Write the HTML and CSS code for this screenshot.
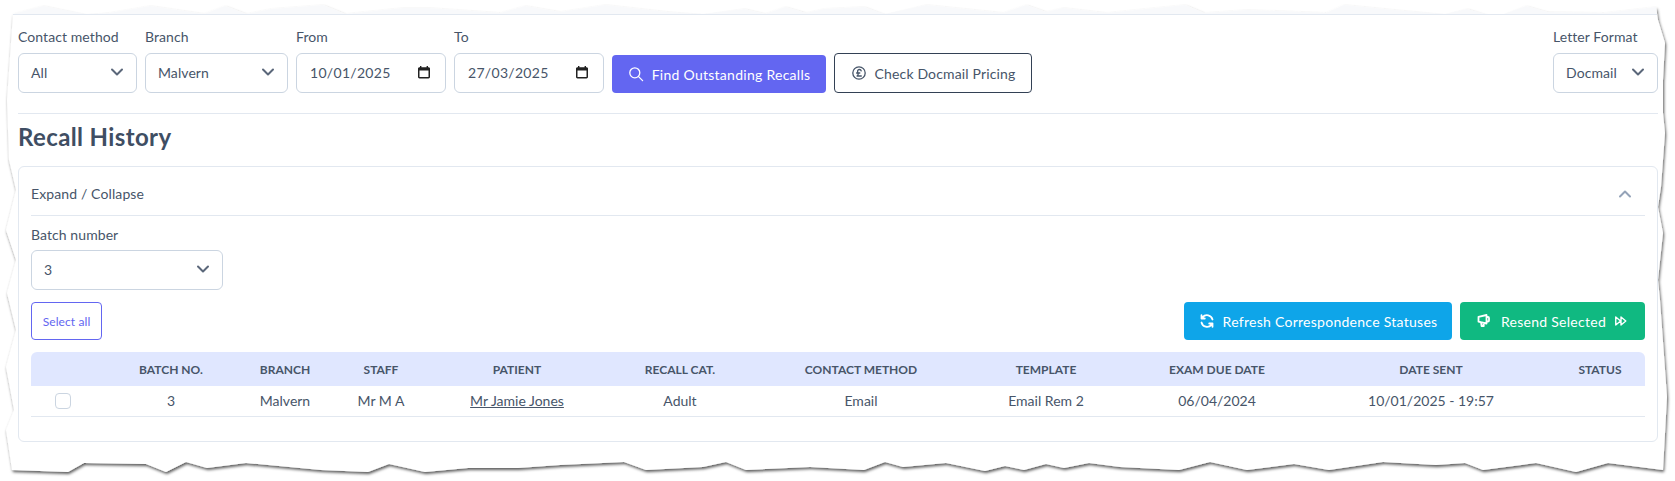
FILE: index.html
```html
<!DOCTYPE html>
<html lang="en">
<head>
<meta charset="utf-8">
<title>Recall History</title>
<link rel="stylesheet" href="styles.css">
</head>
<body>
<svg class="torn" viewBox="0 0 1675 481" width="1675" height="481" aria-hidden="true">
  <defs>
    <filter id="tornShadow" x="-2%" y="-5%" width="104%" height="110%">
      <feDropShadow dx="1" dy="2" stdDeviation="1.4" flood-color="#000" flood-opacity=".65"/>
    </filter>
  </defs>
  <path class="sheet" filter="url(#tornShadow)" d="M13 14 L43 6 L86 15 L109 13 L150 6 L204 14 L225 6 L246 14 L271 9 L323 5 L345 14 L403 8 L428 8 L500 13 L525 6 L560 12 L605 5 L667 12 L703 15 L744 9 L765 14 L785 7 L806 13 L824 9 L864 7 L885 15 L926 5 L1003 13 L1026 5 L1046 12 L1063 8 L1106 13 L1185 5 L1204 13 L1247 10 L1326 13 L1344 5 L1394 10 L1445 15 L1467 9 L1486 15 L1504 15 L1526 6 L1547 12 L1604 13 L1656 7 L1658 20 L1665 43 L1663 80 L1663 113 L1665 133 L1661 187 L1658 207 L1663 233 L1658 280 L1660 300 L1667 397 L1663 470 L1608 463 L1576 472 L1536 463 L1483 470 L1465 463 L1436 465 L1383 462 L1329 470 L1294 464 L1247 470 L1210 462 L1179 470 L1120 467 L1089 463 L1064 468 L1046 464 L1024 470 L1005 466 L985 471 L946 463 L903 467 L885 462 L864 470 L810 467 L746 470 L726 462 L703 467 L646 470 L624 462 L560 465 L518 468 L468 468 L425 472 L389 464 L368 472 L321 470 L246 463 L207 468 L186 462 L166 472 L146 464 L84 463 L68 472 L12 470 L6 430 L14 410 L6 367 L16 330 L7 293 L16 260 L6 230 L16 190 L9 160 L7 100 L13 14 Z"/>
  <path class="strip" d="M13 14 L43 6 L86 14 L109 13 L150 6 L204 14 L225 6 L246 14 L271 9 L323 5 L345 14 L403 8 L428 8 L500 13 L525 6 L560 12 L605 5 L667 12 L703 14 L744 9 L765 14 L785 7 L806 13 L824 9 L864 7 L885 14 L926 5 L1003 13 L1026 5 L1046 12 L1063 8 L1106 13 L1185 5 L1204 13 L1247 10 L1326 13 L1344 5 L1394 10 L1445 14 L1467 9 L1486 14 L1504 14 L1526 6 L1547 12 L1604 13 L1656 7 L1657 14 Z"/>
  <path class="strip-line" d="M13 14.500H1657"/>
</svg>
<main class="page">
  <section class="filters">
    <div class="field w-contact">
      <label class="label">Contact method</label>
      <div class="control"><span>All</span><svg class="chev" viewBox="0 0 20 20"><path d="M5 7.5l5 5 5-5"/></svg></div>
    </div>
    <div class="field w-branch">
      <label class="label">Branch</label>
      <div class="control"><span>Malvern</span><svg class="chev" viewBox="0 0 20 20"><path d="M5 7.5l5 5 5-5"/></svg></div>
    </div>
    <div class="field w-date">
      <label class="label">From</label>
      <div class="control date"><span>10/01/2025</span><svg class="cal" viewBox="0 0 14 14"><path d="M11.5 2.2H11V1H9.6v1.2H4.4V1H3v1.2h-.5C1.7 2.2 1 2.8 1 3.6v8.4c0 .8.7 1.4 1.5 1.4h9c.8 0 1.5-.6 1.5-1.4V3.600c0-.8-.7-1.400-1.500-1.400zm0 9.800h-9V5.400h9V12z"/></svg></div>
    </div>
    <div class="field w-date">
      <label class="label">To</label>
      <div class="control date"><span>27/03/2025</span><svg class="cal" viewBox="0 0 14 14"><path d="M11.5 2.2H11V1H9.6v1.2H4.4V1H3v1.2h-.5C1.7 2.2 1 2.8 1 3.6v8.4c0 .8.7 1.4 1.5 1.4h9c.8 0 1.5-.6 1.5-1.4V3.600c0-.8-.7-1.400-1.500-1.400zm0 9.800h-9V5.400h9V12z"/></svg></div>
    </div>
    <button class="btn btn-find"><svg class="ico" viewBox="0 0 16 16"><circle cx="6.8" cy="6.8" r="5"/><path d="M10.6 10.6l4 4"/></svg>Find Outstanding Recalls</button>
    <button class="btn btn-price"><svg class="ico" viewBox="0 0 16 16"><circle cx="8" cy="8" r="6.2"/><path d="M10.2 5.900c-.2-1-.9-1.400-1.800-1.400-1.100 0-1.800.7-1.800 1.800 0 1.500.5 2 .5 3 0 .8-.4 1.400-1.100 1.700h4.300M5.600 8h3.200"/></svg>Check Docmail Pricing</button>
    <div class="field w-letter">
      <label class="label">Letter Format</label>
      <div class="control"><span>Docmail</span><svg class="chev" viewBox="0 0 20 20"><path d="M5 7.5l5 5 5-5"/></svg></div>
    </div>
  </section>
  <h1 class="title">Recall History</h1>
  <section class="card">
    <header class="card-head">
      <span>Expand / Collapse</span>
      <svg class="chev-up" viewBox="0 0 20 20"><path d="M5 12.500l5-5 5 5"/></svg>
    </header>
    <div class="field w-batch">
      <label class="label">Batch number</label>
      <div class="control"><span>3</span><svg class="chev" viewBox="0 0 20 20"><path d="M5 7.5l5 5 5-5"/></svg></div>
    </div>
    <div class="actions">
      <button class="btn btn-select">Select all</button>
      <div class="actions-right">
        <button class="btn btn-refresh"><svg class="ico ico-bold" viewBox="0 0 16 16"><path d="M13.500 6.500A5.700 5.700 0 0 0 3.600 4.200L2.500 5.500M2.500 2.200v3.300h3.300M2.500 9.500a5.700 5.700 0 0 0 9.900 2.300l1.100-1.300M13.500 13.800v-3.300h-3.300"/></svg>Refresh Correspondence Statuses</button>
        <button class="btn btn-resend"><svg class="ico ico-bold" viewBox="0 0 16 16"><path d="M1.500 3.800 9.500 2v8.500l-8-1.800zM9.500 4h1.500a1 1 0 0 1 1 1v2.500a1 1 0 0 1-1 1H9.500M4 9.200l.6 3.800h2.200l-.5-3.300"/></svg>Resend Selected<svg class="ico ico-after" viewBox="0 0 16 16"><path d="M2 3.500v9l5.500-4.500zM8 3.500v9l5.500-4.500z"/></svg></button>
      </div>
    </div>
    <table class="grid">
      <colgroup><col class="c1"><col class="c2"><col class="c3"><col class="c4"><col class="c5"><col class="c6"><col class="c7"><col class="c8"><col class="c9"><col class="c10"><col class="c11"></colgroup>
      <thead>
        <tr><th></th><th>BATCH NO.</th><th>BRANCH</th><th>STAFF</th><th>PATIENT</th><th>RECALL CAT.</th><th>CONTACT METHOD</th><th>TEMPLATE</th><th>EXAM DUE DATE</th><th>DATE SENT</th><th>STATUS</th></tr>
      </thead>
      <tbody>
        <tr><td><span class="check"></span></td><td>3</td><td>Malvern</td><td>Mr M A</td><td><a class="link">Mr Jamie Jones</a></td><td>Adult</td><td>Email</td><td>Email Rem 2</td><td>06/04/2024</td><td>10/01/2025 - 19:57</td><td></td></tr>
      </tbody>
    </table>
  </section>
</main>
</body>
</html>
```
FILE: styles.css
```css
* { box-sizing: border-box; }
html, body { margin: 0; padding: 0; }
body {
  position: relative;
  width: 1675px;
  height: 481px;
  overflow: hidden;
  background: #fff;
  color: #475569;
  font-family: "Lato", "Noto Sans", sans-serif;
  font-size: 14px;
  letter-spacing: .08px;
}
.torn { position: absolute; left: 0; top: 0; }
.sheet { fill: #fff; }
.strip { fill: #f8f9fb; }
.strip-line { stroke: #e2e8f0; stroke-width: 1; fill: none; }
.page {
  position: relative;
  margin-left: 18px;
  width: 1640px;
  padding-top: 28px;
}
.filters {
  display: flex;
  align-items: flex-end;
  gap: 8px;
  height: 86px;
  padding-bottom: 20px;
  border-bottom: 1px solid #e2e8f0;
}
.field { display: flex; flex-direction: column; }
.label { height: 18px; line-height: 18px; margin-bottom: 7px; color: #475569; }
.control {
  display: flex;
  align-items: center;
  justify-content: space-between;
  height: 40px;
  padding: 0 12px 2px;
  border: 1px solid #cbd5e1;
  border-radius: 6px;
  background: #fff;
}
.control.date { padding: 0 14px 2px 13px; letter-spacing: .3px; }
.w-contact { width: 119px; }
.w-branch { width: 143px; }
.w-date { width: 150px; }
.w-letter { width: 105px; margin-left: auto; }
.w-batch { width: 192px; margin-top: 10px; }
.w-batch .label { margin-bottom: 6px; }
.chev { width: 20px; height: 20px; margin-right: -3px; fill: none; stroke: #5b677a; stroke-width: 2; stroke-linecap: round; stroke-linejoin: round; }
.chev-up { width: 20px; height: 20px; fill: none; stroke: #94a3b8; stroke-width: 2; stroke-linecap: round; stroke-linejoin: round; }
.cal { width: 14px; height: 14px; fill: #222; }
.btn {
  display: inline-flex;
  align-items: center;
  justify-content: center;
  gap: 8px;
  height: 38px;
  padding: 0;
  border: 0;
  border-radius: 4px;
  font: inherit;
  letter-spacing: .27px;
  white-space: nowrap;
  color: #fff;
}
.ico { width: 16px; height: 16px; fill: none; stroke: currentColor; stroke-width: 1.300; stroke-linecap: round; stroke-linejoin: round; flex: none; }
.ico-bold { stroke-width: 1.800; }
.btn-find { width: 214px; background: #6366f1; }
.btn-price { width: 198px; height: 40px; background: #fff; color: #475569; border: 1px solid #334155; letter-spacing: .15px; }
.title { margin: 7px 0 13px; height: 32px; line-height: 32px; font-size: 24px; font-weight: 700; letter-spacing: .38px; color: #3f4e63; }
.card {
  height: 276px;
  padding: 0 12px;
  border: 1px solid #e2e8f0;
  border-radius: 6px;
}
.card-head {
  display: flex;
  align-items: center;
  justify-content: space-between;
  height: 49px;
  padding: 5px 10px 0 0;
  border-bottom: 1px solid #e2e8f0;
  letter-spacing: .12px;
}
.actions { display: flex; justify-content: space-between; margin-top: 12px; }
.actions-right { display: flex; gap: 8px; }
.btn-select { width: 71px; padding: 0; height: 38px; background: #fff; color: #6366f1; border: 1px solid #6366f1; font-size: 12px; letter-spacing: .1px; }
.btn-refresh { width: 268px; background: #0ea5e9; }
.btn-resend { width: 185px; background: #10b981; }
.ico-after { width: 14px; height: 14px; stroke-width: 1.600; }
.grid { width: 1614px; margin-top: 12px; border-collapse: separate; border-spacing: 0; table-layout: fixed; text-align: center; letter-spacing: 0; }
.c1 { width: 64px; } .c2 { width: 152px; } .c3 { width: 76px; } .c4 { width: 116px; } .c5 { width: 156px; }
.c6 { width: 170px; } .c7 { width: 192px; } .c8 { width: 178px; } .c9 { width: 164px; } .c10 { width: 264px; } .c11 { width: 82px; }
.grid th { height: 34px; padding: 0; background: #e0e7ff; font-size: 12px; font-weight: 700; color: #475569; }
.grid th:first-child { border-top-left-radius: 6px; }
.grid th:last-child { border-top-right-radius: 6px; padding-right: 8px; }
.grid td { height: 31px; padding: 0 0 1px; border-bottom: 1px solid #e2e8f0; }
.check { display: block; width: 16px; height: 16px; margin: 0 auto; border: 1px solid #cbd5e1; border-radius: 4px; background: #fff; }
.link { text-decoration: underline; color: #475569; }
```
